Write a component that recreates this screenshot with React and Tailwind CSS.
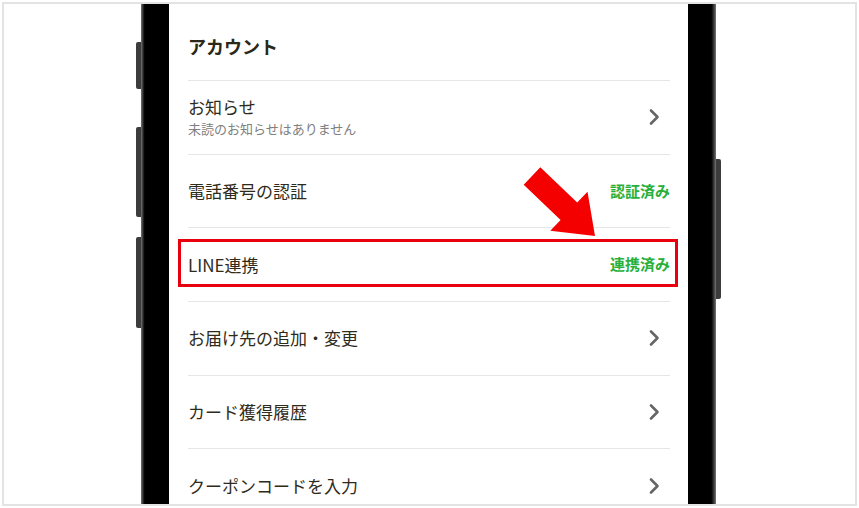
import React from "react";

const font = { fontFamily: '"Noto Sans CJK JP", "Noto Sans", sans-serif' };

function Chevron() {
  return (
    <svg width="12" height="18" viewBox="0 0 12 18" className="mr-[10px]">
      <path d="M3 2.5l6.5 6.5L3 15.5" fill="none" stroke="#666" strokeWidth="2.6" strokeLinecap="round" strokeLinejoin="round" />
    </svg>
  );
}

function Row({ title, sub, status, boxed }) {
  return (
    <div className="relative flex h-[73.7px] items-center justify-between border-t border-[#e6e6e6]">
      <div className="flex flex-col">
        <span className="text-[17px] leading-[24px] text-[#2f2b1a]">{title}</span>
        {sub && <span className="text-[13px] leading-[20px] text-[#808080]">{sub}</span>}
      </div>
      {status ? (
        <span className="text-[15px] font-bold text-[#28b03a]">{status}</span>
      ) : (
        <Chevron />
      )}
      {boxed && (
        <div className="absolute left-[-10px] right-[-8px] top-[11px] h-[48px] border-[3px] border-[#e8000f]" />
      )}
    </div>
  );
}

export default function App() {
  return (
    <div className="relative h-[508px] w-[859px] overflow-hidden bg-white" style={font}>
      <div className="m-[2px] flex h-[504px] overflow-hidden border-2 border-[#e3e3e3] pl-[132px]">
        {/* left side buttons */}
        <div className="flex w-[5px] flex-col">
          <div className="mt-[38px] h-[47px] rounded-l-[2px] bg-[#3c3c3c]" />
          <div className="mt-[38px] h-[90px] rounded-l-[2px] bg-[#3c3c3c]" />
          <div className="mt-[20px] h-[91px] rounded-l-[2px] bg-[#3c3c3c]" />
        </div>
        <div className="w-[28px] bg-gradient-to-r from-[#777] via-black via-[16%] to-black" />

        {/* screen */}
        <div className="w-[519px] bg-white pl-[19px] pr-[18px]">
          <div className="flex h-[76px] items-center pt-[8px]">
            <h2 className="text-[18px] font-bold text-[#2b2817]">アカウント</h2>
          </div>
          <Row title="お知らせ" sub="未読のお知らせはありません" />
          <Row title="電話番号の認証" status="認証済み" />
          <Row title="LINE連携" status="連携済み" boxed />
          <Row title="お届け先の追加・変更" />
          <Row title="カード獲得履歴" />
          <Row title="クーポンコードを入力" />
        </div>

        <div className="w-[28px] bg-gradient-to-r from-black via-black via-[80%] to-[#777]" />
        <div className="flex w-[5px] flex-col">
          <div className="mt-[155px] h-[140px] rounded-r-[2px] bg-[#3c3c3c]" />
        </div>
      </div>

      {/* annotation arrow */}
      <svg className="pointer-events-none absolute left-0 top-0" width="859" height="508">
        <polygon
          points="540.3,167.3 577.2,202.5 587.5,191.7 595,236 550.3,230.7 560.6,219.9 523.7,184.7"
          fill="#f50000"
        />
      </svg>
    </div>
  );
}
